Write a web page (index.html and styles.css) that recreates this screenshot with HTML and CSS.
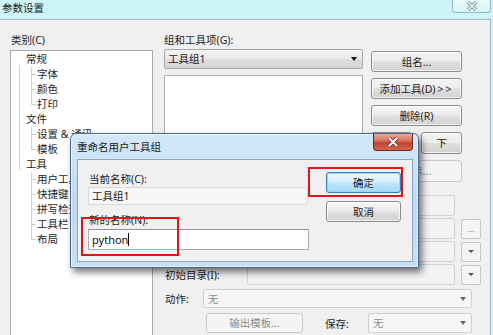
FILE: index.html
```html
<!DOCTYPE html>
<html lang="zh-CN">

<head>
    <meta charset="utf-8">
    <title>参数设置</title>
    <link rel="stylesheet" href="styles.css">
</head>

<body>
    <!--Main settings window-->
    <div class="window">
        <div class="titlebar">
            <span class="title">参数设置</span>
            <span class="win-close">
                <svg width="12" height="10" viewBox="0 0 12 10">
                    <path d="M2 1 L10 9 M10 1 L2 9" stroke="#7f9196" stroke-width="3.4" fill="none" />
                    <path d="M2 1 L10 9 M10 1 L2 9" stroke="#f3fdfe" stroke-width="1.5" fill="none" />
                </svg>
            </span>
        </div>

        <div class="client">
            <!--Category tree-->
            <div class="left-col">
                <div class="label cat-label">类别(C)</div>
                <div class="tree">
                    <div class="node">常规</div>
                    <div class="leaf">字体</div>
                    <div class="leaf">颜色</div>
                    <div class="leaf last">打印</div>
                    <div class="node">文件</div>
                    <div class="leaf">设置 &amp; 通讯</div>
                    <div class="leaf last">模板</div>
                    <div class="node">工具</div>
                    <div class="leaf">用户工具</div>
                    <div class="leaf">快捷键</div>
                    <div class="leaf">拼写检查</div>
                    <div class="leaf">工具栏</div>
                    <div class="leaf last">布局</div>
                </div>
            </div>

            <!--Tool groups-->
            <div class="right-col">
                <div class="label">组和工具项(G):</div>
                <div class="top-section">
                    <div class="list-col">
                        <div class="combo"><span>工具组1</span><span class="arrow"></span></div>
                        <div class="listbox"></div>
                    </div>
                    <div class="btn-col">
                        <div class="btn">组名...</div>
                        <div class="btn">添加工具(D)<span class="gt">&gt;&gt;</span></div>
                        <div class="btn">删除(R)</div>
                        <div class="btn-pair">
                            <div class="btn tall">上</div>
                            <div class="btn tall">下</div>
                        </div>
                        <div class="btn tall disabled">显示...</div>
                    </div>
                </div>

                <div class="fields">
                    <div class="field-row">
                        <span class="field-label">菜单文本(M):</span>
                        <div class="textbox"></div>
                        <span class="small-gap"></span>
                    </div>
                    <div class="field-row">
                        <span class="field-label">命令(O):</span>
                        <div class="textbox"></div>
                        <div class="small-btn">...</div>
                    </div>
                    <div class="field-row">
                        <span class="field-label">参数(A):</span>
                        <div class="textbox"></div>
                        <div class="small-btn"><span class="tiny-arrow"></span></div>
                    </div>
                    <div class="field-row">
                        <span class="field-label">初始目录(I):</span>
                        <div class="textbox"></div>
                        <div class="small-btn"><span class="tiny-arrow"></span></div>
                    </div>
                </div>

                <div class="action-row">
                    <span class="action-label">动作:</span>
                    <div class="combo disabled-combo wide"><span>无</span><span class="arrow"></span></div>
                </div>

                <div class="save-row">
                    <div class="btn disabled out-btn">输出模板...</div>
                    <span class="save-label">保存:</span>
                    <div class="combo disabled-combo narrow"><span>无</span><span class="arrow"></span></div>
                </div>
            </div>
        </div>

        <!--Rename dialog-->
        <div class="dialog">
            <div class="dlg-titlebar">
                <span class="dlg-title">重命名用户工具组</span>
                <span class="dlg-close">
                    <svg width="14" height="10" viewBox="0 0 14 10">
                        <path d="M3 1 L11 9 M11 1 L3 9" stroke="#6b1f1a" stroke-width="3.6" fill="none" />
                        <path d="M3 1 L11 9 M11 1 L3 9" stroke="#ffffff" stroke-width="2.2" fill="none" />
                    </svg>
                </span>
            </div>
            <div class="dlg-client">
                <div class="dlg-fields">
                    <div class="dlg-label">当前名称(C):</div>
                    <div class="readonly">工具组1</div>
                    <div class="dlg-label new-label">新的名称(N):</div>
                    <div class="name-input">python<span class="caret"></span></div>
                </div>
                <div class="dlg-buttons">
                    <div class="btn default-btn">确定</div>
                    <div class="btn">取消</div>
                </div>
            </div>
            <!--Red annotation boxes-->
            <div class="mark mark-input"></div>
            <div class="mark mark-ok"></div>
        </div>
    </div>
</body>

</html>
```

FILE: styles.css
```css
/*global styling*/
* {
    box-sizing: border-box;
}

body {
    margin: 0;
    font-family: "Noto Sans", "Noto Sans CJK SC", sans-serif;
    font-size: 10.5px;
    color: #1c1c1c;
}

/*outer window*/
.window {
    position: relative;
    width: 493px;
    height: 335px;
    overflow: hidden;
    background: #cdf4f9;
}

.titlebar {
    height: 19px;
    display: flex;
    justify-content: space-between;
    align-items: flex-start;
    padding-left: 2px;
}

.title {
    line-height: 16px;
    color: #202020;
}

.win-close {
    width: 39px;
    height: 13px;
    margin-right: 2px;
    border: 1px solid #9ab6bd;
    border-top: none;
    border-radius: 0 0 4px 4px;
    background: linear-gradient(#e9fbfd, #d6f3f7);
    display: flex;
    align-items: center;
    justify-content: center;
}

.client {
    height: 316px;
    margin-right: 2px;
    border-top: 1px solid #9fb8be;
    border-right: 1px solid #9fb8be;
    background: #f0f0f0;
    padding: 12px 0 0 10px;
    display: flex;
    gap: 11px;
}

.label {
    line-height: 16px;
    height: 16px;
}

.cat-label {
    padding-left: 1px;
}

/*category tree*/
.left-col {
    width: 143px;
}

.tree {
    margin-top: 2px;
    height: 300px;
    border: 1px solid #a9abae;
    background: #fff linear-gradient(#d2d2d2, #d2d2d2) 8px 14px / 1px 105px no-repeat;
    padding-top: 1px;
}

.node,
.leaf {
    line-height: 15px;
    height: 15px;
}

.node {
    padding-left: 15px;
}

.leaf {
    margin-left: 20px;
    padding-left: 6px;
    background:
        linear-gradient(#d2d2d2, #d2d2d2) 0 0 / 1px 100% no-repeat,
        linear-gradient(#d2d2d2, #d2d2d2) 0 7px / 5px 1px no-repeat;
}

.leaf.last {
    background:
        linear-gradient(#d2d2d2, #d2d2d2) 0 0 / 1px 8px no-repeat,
        linear-gradient(#d2d2d2, #d2d2d2) 0 7px / 5px 1px no-repeat;
}

/*right column*/
.right-col {
    width: 318px;
    display: flex;
    flex-direction: column;
}

.top-section {
    display: flex;
    gap: 8px;
    margin-top: 1px;
}

.list-col {
    width: 199px;
}

.combo {
    height: 20px;
    border: 1px solid #a6a6a6;
    border-radius: 2px;
    background: linear-gradient(#f3f3f3, #e8e8e8 50%, #dcdcdc 51%, #d6d6d6);
    display: flex;
    align-items: center;
    justify-content: space-between;
    padding: 0 5px 0 3px;
    line-height: 14px;
}

.arrow {
    width: 0;
    height: 0;
    border-left: 3px solid transparent;
    border-right: 3px solid transparent;
    border-top: 4px solid #111;
}

.listbox {
    margin-top: 6px;
    height: 110px;
    border: 1px solid #abadb3;
    background: #fff;
}

.btn-col {
    width: 91px;
    padding-top: 2px;
    display: flex;
    flex-direction: column;
    gap: 6px;
}

/*buttons*/
.btn {
    height: 21px;
    border: 1px solid #8c8c8c;
    border-radius: 3px;
    background: linear-gradient(#f4f4f4, #ececec 48%, #dedede 52%, #d2d2d2);
    box-shadow: inset 0 0 0 1px rgba(255, 255, 255, 0.7);
    display: flex;
    align-items: center;
    justify-content: center;
    line-height: 14px;
    color: #1c1c1c;
}

.btn.tall {
    height: 22px;
}

.gt {
    letter-spacing: 2px;
    margin-left: 2px;
}

.btn-pair {
    display: grid;
    grid-template-columns: 41px 41px;
    column-gap: 9px;
}

.btn.disabled {
    border-color: #c9c9c9;
    background: #f4f4f4;
    box-shadow: none;
    color: #8b8b8b;
}

/*text field rows*/
.fields {
    margin-top: 10px;
    display: flex;
    flex-direction: column;
    gap: 2px;
}

.field-row {
    display: flex;
    align-items: center;
    height: 21px;
}

.field-label {
    width: 83px;
    padding-left: 1px;
}

.textbox {
    width: 208px;
    height: 21px;
    border: 1px solid #d3d3d3;
    border-radius: 2px;
    background: #f2f2f2;
}

.small-gap {
    width: 26px;
}

.small-btn {
    width: 20px;
    height: 20px;
    margin-left: 6px;
    border: 1px solid #c6c6c6;
    border-radius: 2px;
    background: #f4f4f4;
    color: #8a8a8a;
    font-size: 9px;
    display: flex;
    align-items: center;
    justify-content: center;
}

.tiny-arrow {
    width: 0;
    height: 0;
    border-left: 3px solid transparent;
    border-right: 3px solid transparent;
    border-top: 3px solid #555;
}

.action-row {
    display: flex;
    align-items: center;
    margin-top: 4px;
}

.action-label {
    width: 39px;
    padding-left: 1px;
}

.disabled-combo {
    background: #f6f6f6;
    border-color: #d0d0d0;
    color: #8c8c8c;
    padding-left: 4px;
}

.disabled-combo .arrow {
    border-top-color: #6a6a6a;
}

.combo.wide {
    width: 269px;
    height: 19px;
}

.save-row {
    display: flex;
    align-items: center;
    margin-top: 5px;
    padding-left: 42px;
}

.out-btn {
    width: 97px;
    height: 20px;
}

.save-label {
    margin-left: 22px;
    width: 43px;
}

.combo.narrow {
    width: 104px;
    height: 20px;
}

/*rename dialog*/
.dialog {
    position: absolute;
    left: 70px;
    top: 133px;
    width: 349px;
    height: 135px;
    padding: 0 5px 5px 6px;
    border: 1px solid #4e6a86;
    border-radius: 6px 6px 0 0;
    background: linear-gradient(#d3e8f8, #bfd9ef 55%, #c8e0f3);
    box-shadow: 3px 4px 7px rgba(0, 0, 0, 0.55), inset 0 0 0 1px rgba(255, 255, 255, 0.5);
    display: flex;
    flex-direction: column;
}

.dlg-titlebar {
    height: 25px;
    display: flex;
    justify-content: space-between;
    align-items: flex-start;
}

.dlg-title {
    padding-top: 5px;
    line-height: 16px;
    color: #1b1b1b;
}

.dlg-close {
    width: 40px;
    height: 17px;
    border: 1px solid #6e2620;
    border-top: none;
    border-radius: 0 0 4px 4px;
    background: linear-gradient(#e9a895, #d4705e 45%, #c2402f 55%, #cf6a4e);
    display: flex;
    align-items: center;
    justify-content: center;
}

.dlg-client {
    flex: 1;
    border: 1px solid #8ca7c0;
    background: #f0f0f0;
    padding: 11px 0 0 10px;
    display: flex;
    gap: 17px;
}

.dlg-fields {
    width: 221px;
}

.dlg-label {
    line-height: 16px;
    height: 16px;
    padding-left: 1px;
}

.readonly {
    width: 220px;
    height: 18px;
    border: 1px solid #dadada;
    background: #f6f6f6;
    line-height: 16px;
    padding-left: 3px;
}

.new-label {
    margin-top: 7px;
}

.name-input {
    margin-top: 1px;
    height: 21px;
    border: 1px solid #abadb3;
    border-top-color: #8e9196;
    background: #fff;
    padding-left: 3px;
    line-height: 19px;
    font-size: 11px;
    color: #111;
    display: flex;
    align-items: center;
}

.caret {
    width: 1px;
    height: 13px;
    background: #000;
}

.dlg-buttons {
    width: 75px;
    padding-top: 1px;
    display: flex;
    flex-direction: column;
    gap: 8px;
}

.default-btn {
    border-color: #3c7fb1;
    background: linear-gradient(#eaf6fd, #d9f0fc 48%, #bee6fd 52%, #a7d9f5);
    box-shadow: inset 0 0 0 1px #9ad6f5;
}

/*annotation boxes*/
.mark {
    position: absolute;
    border: 2px solid #e3141c;
}

.mark-input {
    left: 10px;
    top: 83px;
    width: 98px;
    height: 39px;
}

.mark-ok {
    left: 237px;
    top: 33px;
    width: 95px;
    height: 30px;
}
```
